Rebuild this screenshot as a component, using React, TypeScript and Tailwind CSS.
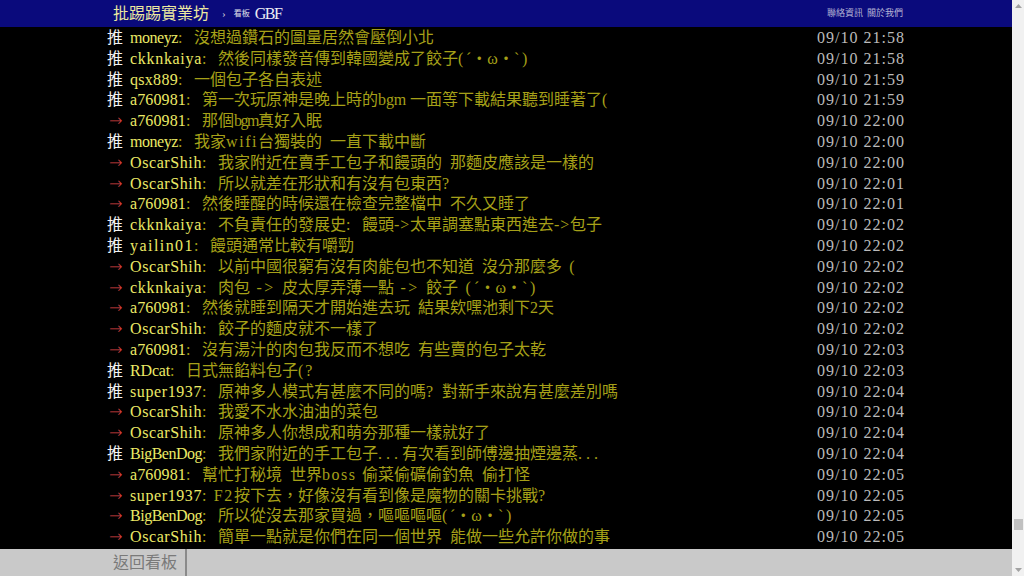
import React from "react";

type Push = [tag: "推" | "→", user: string, content: string, time: string];

const pushes: Push[] = [
    ["推", "moneyz", "沒想過鑽石的圖量居然會壓倒小北", "09/10 21:58"],
    ["推", "ckknkaiya", "然後同樣發音傳到韓國變成了餃子(´・ω・`)", "09/10 21:58"],
    ["推", "qsx889", "一個包子各自表述", "09/10 21:59"],
    ["推", "a760981", "第一次玩原神是晚上時的bgm 一面等下載結果聽到睡著了(", "09/10 21:59"],
    ["→", "a760981", "那個bgm真好入眠", "09/10 22:00"],
    ["推", "moneyz", "我家wifi台獨裝的 一直下載中斷", "09/10 22:00"],
    ["→", "OscarShih", "我家附近在賣手工包子和饅頭的 那麵皮應該是一樣的", "09/10 22:00"],
    ["→", "OscarShih", "所以就差在形狀和有沒有包東西?", "09/10 22:01"],
    ["→", "a760981", "然後睡醒的時候還在檢查完整檔中 不久又睡了", "09/10 22:01"],
    ["推", "ckknkaiya", "不負責任的發展史: 饅頭->太單調塞點東西進去->包子", "09/10 22:02"],
    ["推", "yailin01", "饅頭通常比較有嚼勁", "09/10 22:02"],
    ["→", "OscarShih", "以前中國很窮有沒有肉能包也不知道 沒分那麼多 (", "09/10 22:02"],
    ["→", "ckknkaiya", "肉包 -> 皮太厚弄薄一點 -> 餃子 (´・ω・`)", "09/10 22:02"],
    ["→", "a760981", "然後就睡到隔天才開始進去玩 結果欸嘿池剩下2天", "09/10 22:02"],
    ["→", "OscarShih", "餃子的麵皮就不一樣了", "09/10 22:02"],
    ["→", "a760981", "沒有湯汁的肉包我反而不想吃 有些賣的包子太乾", "09/10 22:03"],
    ["推", "RDcat", "日式無餡料包子(?", "09/10 22:03"],
    ["推", "super1937", "原神多人模式有甚麼不同的嗎? 對新手來說有甚麼差別嗎", "09/10 22:04"],
    ["→", "OscarShih", "我愛不水水油油的菜包", "09/10 22:04"],
    ["→", "OscarShih", "原神多人你想成和萌夯那種一樣就好了", "09/10 22:04"],
    ["推", "BigBenDog", "我們家附近的手工包子...有次看到師傅邊抽煙邊蒸...", "09/10 22:04"],
    ["→", "a760981", "幫忙打秘境 世界boss 偷菜偷礦偷釣魚 偷打怪", "09/10 22:05"],
    ["→", "super1937", "F2按下去，好像沒有看到像是魔物的關卡挑戰?", "09/10 22:05"],
    ["→", "BigBenDog", "所以從沒去那家買過，嘔嘔嘔嘔(´・ω・`)", "09/10 22:05"],
    ["→", "OscarShih", "簡單一點就是你們在同一個世界 能做一些允許你做的事", "09/10 22:05"],
];

// the terminal grid is 8px per half-width cell; stretch ascii runs to fit it
const ctx = document.createElement("canvas").getContext("2d");
function spacing(s: string) {
    if (!ctx) return 0;
    ctx.font = '16px "Liberation Serif"';
    const w = ctx.measureText(s).width;
    return (s.length * 8 - w) / s.length;
}

function Cells({ text }: { text: string }) {
    const parts = text.match(/[\x20-\x7e]+|[^\x20-\x7e]+/g) ?? [];
    return (
        <>
            {parts.map((p, i) =>
                /^[\x20-\x7e]/.test(p) ? (
                    <span key={i} style={{ letterSpacing: `${spacing(p)}px` }}>{p}</span>
                ) : (
                    <span key={i}>{p}</span>
                )
            )}
        </>
    );
}

function PushRow({ push }: { push: Push }) {
    const [tag, user, content, time] = push;
    return (
        <div className="flex h-[20.8px] items-center justify-between whitespace-pre">
            <div className="flex min-w-0 items-center">
                {tag === "推" ? (
                    <span className="inline-block w-[24px] shrink-0 pl-px text-[#f2f2f2]">推</span>
                ) : (
                    <span className="inline-block w-[24px] shrink-0 pl-[3px] font-['DejaVu_Sans'] font-extralight text-[#dc4444]">→</span>
                )}
                <span className="text-[#ecea66]"><Cells text={user} /></span>
                <span className="text-[#a6a018]"><Cells text={": " + content} /></span>
            </div>
            <span className="shrink-0 pr-px text-[#bbbbbb]"><Cells text={time} /></span>
        </div>
    );
}

function Arrow({ up }: { up?: boolean }) {
    return (
        <svg width="7" height="4" viewBox="0 0 7 4">
            <path d={up ? "M0 4 L3.5 0 L7 4 Z" : "M0 0 L3.5 4 L7 0 Z"} fill="#a3a3a3" />
        </svg>
    );
}

export default function App() {
    return (
        <div className="flex h-[576px] w-[1024px] overflow-hidden bg-black" style={{ fontFamily: '"Liberation Serif", "Noto Sans CJK TC", serif' }}>
            <div className="flex min-w-0 flex-1 flex-col">
                <header className="h-[27px] shrink-0 bg-[#0a0a7c]">
                    <div className="mx-auto flex h-full w-[800px] items-center justify-between pl-[7px] pr-[3px]">
                        <div className="flex items-center">
                            <span className="text-[16px] leading-none text-[#ece8a0]">批踢踢實業坊</span>
                            <span className="ml-[13px] text-[11px] leading-none text-[#c8c8d8]">›</span>
                            <span className="ml-[8px] text-[8px] leading-none text-[#e0e0e8]">看板</span>
                            <span className="ml-[5px] text-[16px] leading-none tracking-[-1.5px] text-[#ececf4]">GBF</span>
                        </div>
                        <div className="flex gap-[4px] text-[9px] leading-none text-[#b4b4d4]">
                            <span>聯絡資訊</span>
                            <span>關於我們</span>
                        </div>
                    </div>
                </header>
                <main className="min-h-0 flex-1 overflow-hidden">
                    <div className="mx-auto w-[800px] pt-px text-[16px] leading-[20.8px]">
                        {pushes.map((p, i) => (
                            <PushRow key={i} push={p} />
                        ))}
                    </div>
                </main>
                <footer className="h-[27px] shrink-0 bg-[#c9c9c9]">
                    <div className="mx-auto flex h-full w-[800px]">
                        <span className="pl-[7px] pr-[8px] text-[16px] leading-[27px] text-[#7a7a7a]">返回看板</span>
                        <div className="w-[2px] bg-[#8a8a8a]" />
                    </div>
                </footer>
            </div>
            <aside className="flex w-[12px] shrink-0 flex-col items-center bg-[#f1f1f1]">
                <div className="flex h-[11px] items-center justify-center pt-px">
                    <Arrow up />
                </div>
                <div className="flex-1" />
                <div className="mb-[34px] h-[11px] w-[9px] bg-[#c1c1c1]" />
                <div className="flex h-[12px] items-center justify-center pb-px">
                    <Arrow />
                </div>
            </aside>
        </div>
    );
}
